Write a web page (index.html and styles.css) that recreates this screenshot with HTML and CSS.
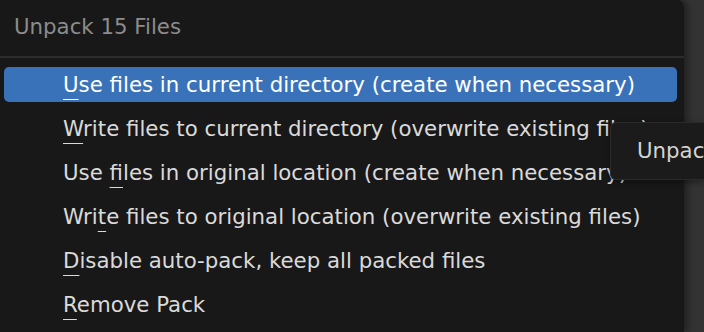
FILE: index.html
```html
<!DOCTYPE html>
<html lang="en">
<head>
  <meta charset="UTF-8">
  <title>Unpack 15 Files</title>
  <link rel="stylesheet" href="styles.css">
</head>
<body>
  <div class="menu">
    <div class="menu-title">Unpack 15 Files</div>
    <div class="menu-sep"></div>
    <div class="menu-items">
      <div class="item active"><span class="key">U</span>se files in current directory (create when necessary)</div>
      <div class="item"><span class="key">W</span>rite files to current directory (overwrite existing files)</div>
      <div class="item">Use <span class="key">f</span>iles in original location (create when necessary)</div>
      <div class="item">Wri<span class="key">t</span>e files to original location (overwrite existing files)</div>
      <div class="item"><span class="key">D</span>isable auto-pack, keep all packed files</div>
      <div class="item"><span class="key">R</span>emove Pack</div>
    </div>
  </div>

  <!-- tooltip for the hovered entry, runs off the window edge -->
  <div class="tooltip">Unpack</div>
</body>
</html>
```

FILE: styles.css
```css
/* dark popup menu */
body {
  margin: 0;
  background-color: #333333;
  font-family: 'DejaVu Sans', sans-serif;
  font-size: 21.3px;
  color: #dadada;
  overflow: hidden;
  height: 332px;
}

.menu {
  width: 684px;
  height: 333px;
  margin-top: -1px;
  background-color: #181818;
  border-top-right-radius: 9px;
  box-shadow: 4px 0 6px rgba(0, 0, 0, 0.35);
  overflow: hidden;
}

.menu-title {
  height: 57px;
  padding-left: 14px;
  line-height: 56px;
  color: #8c8c8c;
}

.menu-sep {
  height: 2px;
  background-color: #2c2c2c;
}

.menu-items {
  display: flex;
  flex-direction: column;
  gap: 9px;
  padding: 9px 7px 0 4px;
}

.item {
  height: 35px;
  line-height: 35px;
  padding-left: 59px;
  border-radius: 5px;
  white-space: nowrap;
  overflow: hidden;
}

.item.active {
  background-color: #3a72ba;
  color: #ffffff;
}

.key {
  text-decoration: underline;
  text-underline-offset: 7px;
  text-decoration-thickness: 1px;
}

.tooltip {
  position: absolute;
  left: 610px;
  top: 122px;
  width: 68px;
  height: 56px;
  padding-left: 26px;
  line-height: 56px;
  background-color: #1b1b1b;
  border: 1px solid #2a2a2a;
  border-right: none;
  border-radius: 6px 0 0 6px;
  color: #d4d4d4;
  white-space: nowrap;
  overflow: hidden;
  box-shadow: 0 2px 6px rgba(0, 0, 0, 0.4);
}
```
